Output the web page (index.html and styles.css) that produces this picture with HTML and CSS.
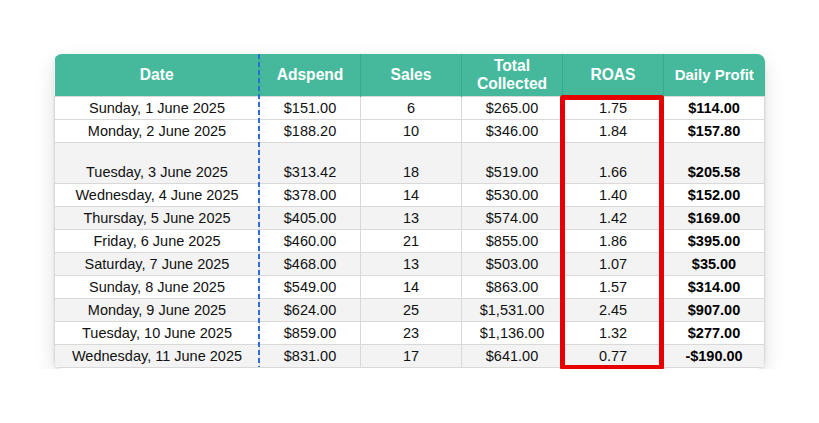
FILE: index.html
```html
<!DOCTYPE html>
<html>
<head>
<meta charset="utf-8">
<link rel="stylesheet" href="styles.css">
</head>
<body>
<div class="wrap">
  <div class="card">
    <table class="sheet">
      <colgroup>
        <col class="c-date"><col class="c-num"><col class="c-num"><col class="c-num"><col class="c-num"><col class="c-profit">
      </colgroup>
      <thead>
        <tr>
          <th>Date</th>
          <th>Adspend</th>
          <th>Sales</th>
          <th class="two">Total<br>Collected</th>
          <th>ROAS</th>
          <th class="small">Daily Profit</th>
        </tr>
      </thead>
      <tbody>
        <tr><td>Sunday, 1 June 2025</td><td>$151.00</td><td>6</td><td>$265.00</td><td>1.75</td><td class="b">$114.00</td></tr>
        <tr><td>Monday, 2 June 2025</td><td>$188.20</td><td>10</td><td>$346.00</td><td>1.84</td><td class="b">$157.80</td></tr>
        <tr class="g tall"><td>Tuesday, 3 June 2025</td><td>$313.42</td><td>18</td><td>$519.00</td><td>1.66</td><td class="b">$205.58</td></tr>
        <tr><td>Wednesday, 4 June 2025</td><td>$378.00</td><td>14</td><td>$530.00</td><td>1.40</td><td class="b">$152.00</td></tr>
        <tr class="g"><td>Thursday, 5 June 2025</td><td>$405.00</td><td>13</td><td>$574.00</td><td>1.42</td><td class="b">$169.00</td></tr>
        <tr><td>Friday, 6 June 2025</td><td>$460.00</td><td>21</td><td>$855.00</td><td>1.86</td><td class="b">$395.00</td></tr>
        <tr class="g"><td>Saturday, 7 June 2025</td><td>$468.00</td><td>13</td><td>$503.00</td><td>1.07</td><td class="b">$35.00</td></tr>
        <tr><td>Sunday, 8 June 2025</td><td>$549.00</td><td>14</td><td>$863.00</td><td>1.57</td><td class="b">$314.00</td></tr>
        <tr class="g"><td>Monday, 9 June 2025</td><td>$624.00</td><td>25</td><td>$1,531.00</td><td>2.45</td><td class="b">$907.00</td></tr>
        <tr><td>Tuesday, 10 June 2025</td><td>$859.00</td><td>23</td><td>$1,136.00</td><td>1.32</td><td class="b">$277.00</td></tr>
        <tr class="g"><td>Wednesday, 11 June 2025</td><td>$831.00</td><td>17</td><td>$641.00</td><td>0.77</td><td class="b">-$190.00</td></tr>
      </tbody>
    </table>
  </div>
  <div class="dash"></div>
  <div class="highlight"></div>
</div>
</body>
</html>
```

FILE: styles.css
```css
html, body {
  margin: 0;
  padding: 0;
  background: #ffffff;
}
body {
  font-family: "Liberation Sans", Arial, Helvetica, sans-serif;
  color: #000;
}
.wrap {
  position: relative;
  width: 711px;
  margin: 54px 0 0 54px;
}
.card {
  width: 711px;
  height: 315px;
  border-radius: 8px;
  overflow: hidden;
  background: #fff;
  box-shadow: 0 8px 20px rgba(0, 0, 0, 0.12), 0 1px 3px rgba(0, 0, 0, 0.10);
}
.sheet {
  border-collapse: collapse;
  table-layout: fixed;
  width: 710px;
}
.c-date { width: 205px; }
.c-num { width: 101px; }
.c-profit { width: 101px; }
.sheet th {
  background: #46b99c;
  color: #fff;
  font-weight: bold;
  font-size: 15.6px;
  line-height: 18px;
  height: 42px;
  padding: 0;
  border-left: 1px solid #3aa98d;
  text-align: center;
  vertical-align: middle;
}
.sheet th:first-child { border-left: none; }
.sheet th.small { font-size: 15px; }
.sheet td {
  font-size: 14.5px;
  height: 21px;
  line-height: 16px;
  padding: 0 0 1px 0;
  text-align: center;
  vertical-align: middle;
  border: 1px solid #d9d9d9;
  white-space: nowrap;
  color: #111;
}
.sheet tr.g td { background: #f3f3f3; }
.sheet tr.tall td {
  height: 37px;
  vertical-align: bottom;
  padding-bottom: 3px;
}
.sheet td.b { font-weight: bold; color: #000; }
.dash {
  position: absolute;
  left: 204px;
  top: 0;
  width: 2px;
  height: 313px;
  background: repeating-linear-gradient(to bottom, #2d6fd4 0 5px, transparent 5px 8px);
}
.highlight {
  position: absolute;
  left: 506px;
  top: 41px;
  width: 104px;
  height: 275px;
  box-sizing: border-box;
  border: 5px solid #e60000;
  border-radius: 3px;
}
```
